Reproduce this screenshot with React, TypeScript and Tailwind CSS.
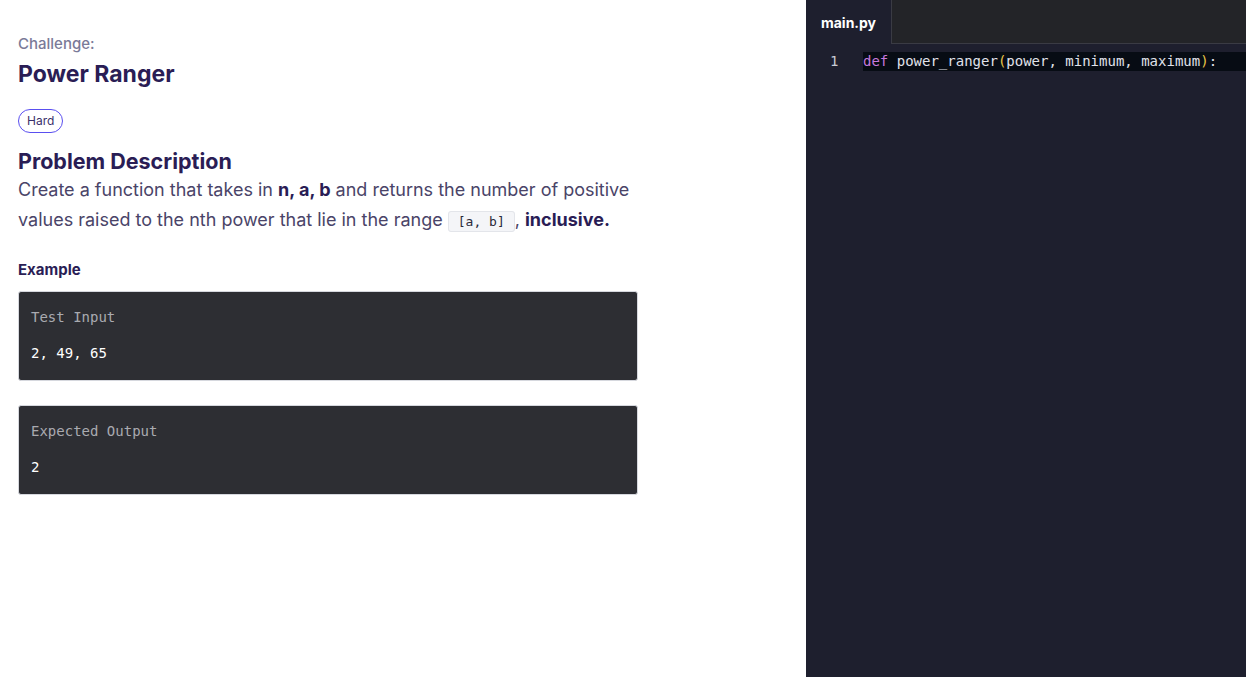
import React from 'react'

const mono = "'DejaVu Sans Mono', 'Liberation Mono', monospace"

function ExampleBox({ label, value }: { label: string; value: string }) {
  return (
    <div
      className="rounded-[3px] border border-[#d6d8de] bg-[#2d2e33] px-3 pt-[17px] pb-[18px] text-[14px] leading-[17px]"
      style={{ fontFamily: mono }}
    >
      <div className="text-[#a9aab0]">{label}</div>
      <div className="mt-[19px] text-white">{value}</div>
    </div>
  )
}

export default function App() {
  return (
    <div className="flex h-[677px] w-full bg-white" style={{ fontFamily: "Inter, 'Noto Sans', sans-serif" }}>
      {/* left: challenge description */}
      <div className="w-[806px] shrink-0 px-[18px] pt-[33px]">
        <div className="text-[15px] font-medium text-[#7a7a98]">Challenge:</div>
        <h1 className="mt-[3px] text-[23px] font-bold leading-[30px] text-[#2a1d55]">Power Ranger</h1>
        <span className="mt-[20px] inline-block rounded-full border border-[#5a4ff0] px-[8px] py-[4px] text-[12px] leading-[14px] text-[#3a2f6a]">
          Hard
        </span>
        <h2 className="mt-[14px] text-[21.5px] font-bold leading-[28px] text-[#2a1d55]">Problem Description</h2>
        <p className="w-[625px] text-[18px] leading-[30px] text-[#4a4468]">
          Create a function that takes in <b className="text-[#2a1d55]">n, a, b</b> and returns the number of positive
          values raised to the nth power that lie in the range{' '}
          <code
            className="rounded-[3px] border border-[#e3e5ea] bg-[#f4f5f8] px-[9px] py-[2px] text-[13px] text-[#2a2a3a]"
            style={{ fontFamily: mono }}
          >
            [a, b]
          </code>
          , <b className="text-[#2a1d55]">inclusive.</b>
        </p>
        <h3 className="mt-[22px] text-[15px] font-bold text-[#2a1d55]">Example</h3>
        <div className="mt-[10px] flex w-[620px] flex-col gap-[24px]">
          <ExampleBox label="Test Input" value="2, 49, 65" />
          <ExampleBox label="Expected Output" value="2" />
        </div>
      </div>

      {/* right: editor */}
      <div className="flex min-w-0 flex-1 flex-col bg-[#1e1f2e]">
        <div className="flex h-[44px] shrink-0">
          <div className="flex w-[85px] items-center justify-center bg-[#1e1f2e] text-[14px] font-bold text-white">main.py</div>
          <div className="flex-1 border-b border-l border-[#3a3b44] bg-[#232428]" />
        </div>
        <div className="mt-2 flex text-[14px] leading-[19px]" style={{ fontFamily: mono }}>
          <div className="w-[57px] shrink-0 pl-[24px] text-[#c8cad4]">1</div>
          <div className="flex-1 whitespace-pre bg-[#070c14] text-[#e0e2ea]">
            <span className="text-[#c678dd]">def</span> power_ranger<span className="text-[#e8c547]">(</span>power, minimum, maximum<span className="text-[#e8c547]">)</span>:
          </div>
        </div>
      </div>
    </div>
  )
}
